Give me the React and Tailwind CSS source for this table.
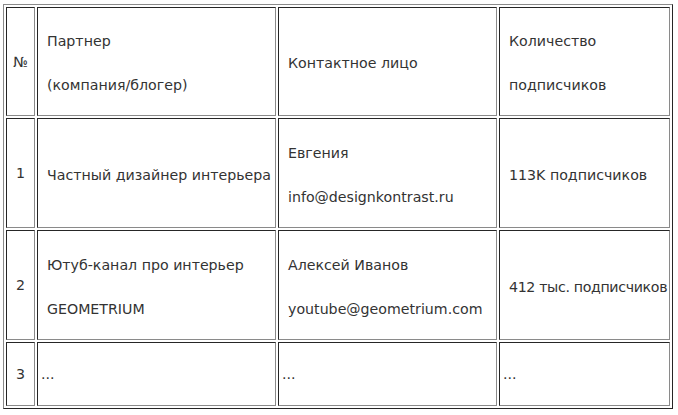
const ROWS = [
  {
    n: '1',
    partner: ['Частный дизайнер интерьера'],
    contact: ['Евгения', 'info@designkontrast.ru'],
    subs: ['113K подписчиков'],
  },
  {
    n: '2',
    partner: ['Ютуб-канал про интерьер', 'GEOMETRIUM'],
    contact: ['Алексей Иванов', 'youtube@geometrium.com'],
    subs: ['412 тыс. подписчиков'],
    tight: true,
  },
];

const cell = 'border border-t-[#262626] border-l-[#262626] border-b-[#8a8a8a] border-r-[#8a8a8a] p-0 align-middle';

function Lines({ items, tight }) {
  return (
    <div className={`flex flex-col gap-[22px] pl-[9px] pt-[3px] ${tight ? 'tracking-[-0.35px]' : ''}`}>
      {items.map((t) => (
        <p key={t} className="leading-[22px] whitespace-nowrap">{t}</p>
      ))}
    </div>
  );
}

export default function App() {
  return (
    <div className="bg-white w-[678px] h-[415px] pt-[4px] pl-[3px] font-['DejaVu_Sans',sans-serif] text-[14.2px] text-[#333]">
      <table className="border-separate border-spacing-[2px] border border-t-[#8a8a8a] border-l-[#8a8a8a] border-b-[#262626] border-r-[#262626] table-fixed w-[670px]">
        <colgroup>
          <col className="w-[29px]" />
          <col className="w-[239px]" />
          <col className="w-[219px]" />
          <col />
        </colgroup>
        <tbody>
          <tr className="h-[109px]">
            <td className={`${cell} text-center pt-[2px]`}>№</td>
            <td className={`${cell} text-left`}><Lines items={['Партнер', '(компания/блогер)']} /></td>
            <td className={`${cell} text-left`}><Lines items={['Контактное лицо']} /></td>
            <td className={`${cell} text-left`}><Lines items={['Количество', 'подписчиков']} /></td>
          </tr>
          {ROWS.map((r) => (
            <tr key={r.n} className="h-[110px]">
              <td className={`${cell} text-center pt-[2px]`}>{r.n}</td>
              <td className={`${cell} text-left`}><Lines items={r.partner} /></td>
              <td className={`${cell} text-left`}><Lines items={r.contact} /></td>
              <td className={`${cell} text-left`}><Lines items={r.subs} tight={r.tight} /></td>
            </tr>
          ))}
          <tr className="h-[64px]">
            <td className={`${cell} text-center pt-[2px]`}>3</td>
            <td className={`${cell} text-left pl-[3px] pt-[2px]`}>...</td>
            <td className={`${cell} text-left pl-[3px] pt-[2px]`}>...</td>
            <td className={`${cell} text-left pl-[3px] pt-[2px]`}>...</td>
          </tr>
        </tbody>
      </table>
    </div>
  );
}
